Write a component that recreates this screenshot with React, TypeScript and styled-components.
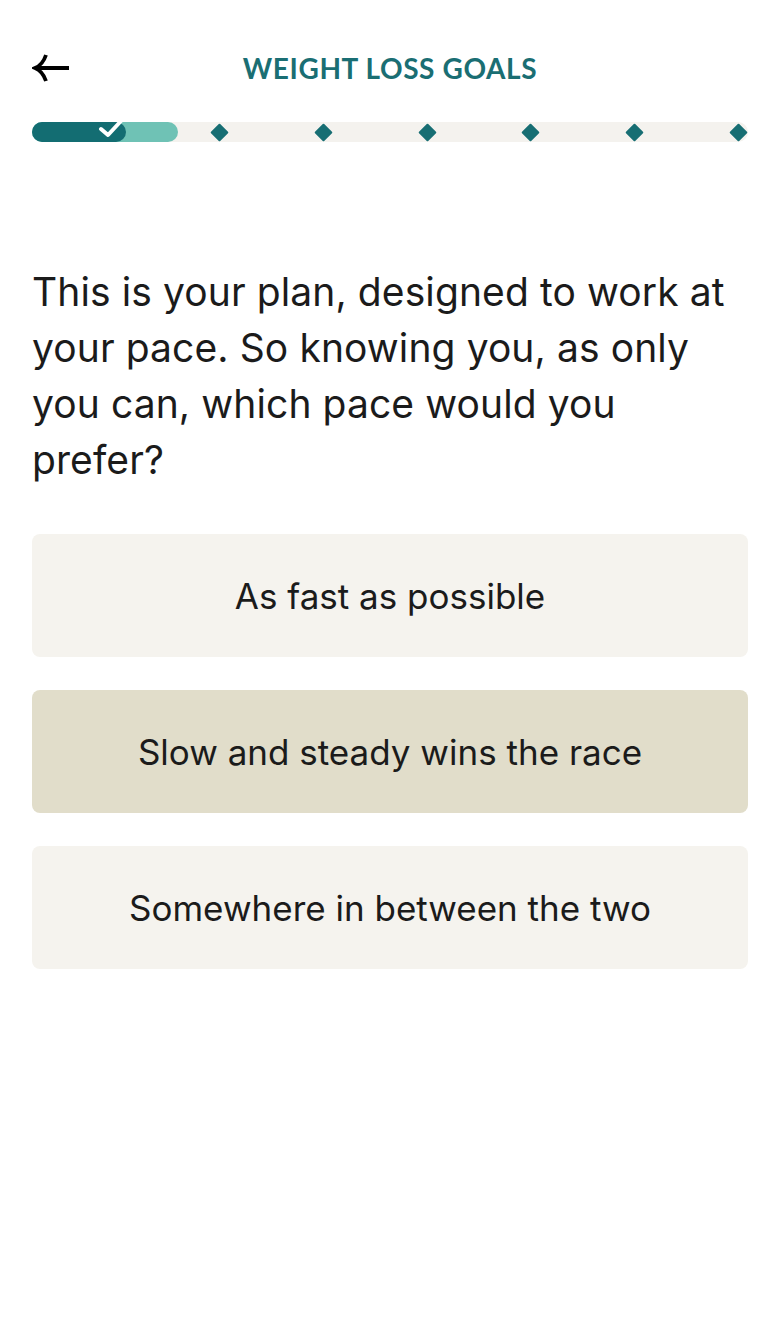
import { FC } from 'react';
import { styled, createGlobalStyle } from 'styled-components';

const options = [
  { label: 'As fast as possible', selected: false },
  { label: 'Slow and steady wins the race', selected: true },
  { label: 'Somewhere in between the two', selected: false },
];

const App: FC = () => {
  return (
    <>
      <GlobalStyle />
      <Page>
        <Header>
          <BackButton aria-label='Back'>
            <svg width='38' height='30' viewBox='0 0 38 30' fill='none'>
              <path d='M3 15H37' stroke='#000' strokeWidth='3.8' />
              <path d='M14 2C12 8 8 13 3 15C8 17 12 22 14 28' stroke='#000' strokeWidth='3.8' fill='none' />
            </svg>
          </BackButton>
          <Title>WEIGHT LOSS GOALS</Title>
          <span />
        </Header>

        <Track>
          <Fill>
            <Done>
              <svg width='26' height='20' viewBox='0 0 26 20' fill='none'>
                <path d='M3 10L10 16L23 2' stroke='#fff' strokeWidth='4' strokeLinecap='round' strokeLinejoin='round' />
              </svg>
            </Done>
          </Fill>
          <Step />
          {[0, 1, 2, 3, 4, 5].map((i) => (
            <Step key={i}>
              <Diamond />
            </Step>
          ))}
        </Track>

        <Question>
          This is your plan, designed to work at your pace. So knowing you, as only you can, which pace would you prefer?
        </Question>

        <Options>
          {options.map((o) => (
            <Option key={o.label} $selected={o.selected}>
              {o.label}
            </Option>
          ))}
        </Options>
      </Page>
    </>
  );
};

export default App;

const GlobalStyle = createGlobalStyle`
  html, body {
    margin: 0;
    padding: 0;
    background: #ffffff;
  }
  body {
    font-family: 'Inter', 'Liberation Sans', sans-serif;
    color: #1b1b1b;
  }
`;

const Page = styled.div`
  min-height: 1326px;
  padding: 46px 32px 0;
  box-sizing: border-box;
  display: flex;
  flex-direction: column;
`;

const Header = styled.div`
  display: grid;
  grid-template-columns: 40px 1fr 40px;
  align-items: center;
  height: 44px;
`;

const BackButton = styled.button`
  border: none;
  background: none;
  padding: 0;
  display: flex;
  align-items: center;
  cursor: pointer;
`;

const Title = styled.h1`
  margin: 0;
  text-align: center;
  font-family: 'Lato', sans-serif;
  font-weight: 700;
  font-size: 28px;
  letter-spacing: 0.6px;
  color: #1a6e73;
`;

const Track = styled.div`
  position: relative;
  margin-top: 32px;
  height: 20px;
  border-radius: 10px;
  background: #f4f2ee;
  display: grid;
  grid-template-columns: 93px repeat(6, 1fr);
`;

const Fill = styled.div`
  position: absolute;
  left: 0;
  top: 0;
  bottom: 0;
  width: 146px;
  border-radius: 10px;
  background: #6fc2b5;
`;

const Done = styled.div`
  position: relative;
  height: 100%;
  width: 94px;
  border-radius: 10px;
  background: #136d72;

  svg {
    position: absolute;
    right: 2px;
    top: -3px;
  }
`;

const Step = styled.div`
  display: flex;
  align-items: center;
  justify-content: flex-end;
  padding-right: 3px;
`;

const Diamond = styled.div`
  width: 13px;
  height: 13px;
  background: #176e73;
  transform: rotate(45deg);
  border-radius: 1px;
`;

const Question = styled.p`
  margin: 122px 0 0;
  max-width: 700px;
  font-size: 39px;
  line-height: 56px;
  font-weight: 400;
  letter-spacing: 0.1px;
  color: #1b1b1b;
`;

const Options = styled.div`
  margin-top: 46px;
  display: flex;
  flex-direction: column;
  gap: 33px;
`;

const Option = styled.button<{ $selected: boolean }>`
  height: 123px;
  border: none;
  border-radius: 8px;
  background: ${(p) => (p.$selected ? '#e1ddca' : '#f5f3ee')};
  font-family: 'Inter', 'Liberation Sans', sans-serif;
  font-size: 35px;
  color: #1b1b1b;
  text-align: center;
  cursor: pointer;
`;
